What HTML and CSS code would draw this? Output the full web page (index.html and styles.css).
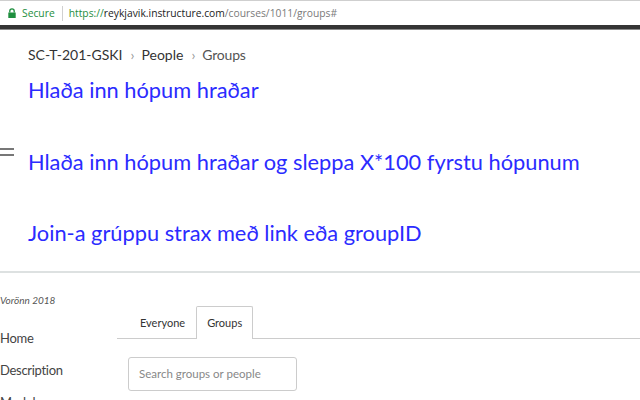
FILE: index.html
```html
<!DOCTYPE html>
<html>
<head>
<meta charset="utf-8">
<link rel="stylesheet" href="styles.css">
</head>
<body>
<div class="addressbar">
  <svg class="lock" width="8" height="10" viewBox="0 0 8 10"><path d="M1.8 4.5V3a2.2 2.2 0 0 1 4.4 0v1.5" fill="none" stroke="#1e8e3e" stroke-width="1.3"/><rect x="0.3" y="4.5" width="7.4" height="5.5" fill="#1e8e3e"/></svg>
  <span class="secure">Secure</span>
  <span class="sep"></span>
  <span class="url"><span class="scheme">https://</span><span class="host">reykjavik.instructure.com</span><span class="path">/courses/1011/groups#</span></span>
</div>
<div class="page">
  <nav class="crumbs"><span>SC-T-201-GSKI</span><span class="chev">›</span><span>People</span><span class="chev">›</span><span class="last">Groups</span></nav>
  <a class="bigl first" href="#">Hlaða inn hópum hraðar</a>
  <div class="row">
    <span class="burger"><i></i><i></i></span>
    <a class="bigl" href="#">Hlaða inn hópum hraðar og sleppa X*100 fyrstu hópunum</a>
  </div>
  <a class="bigl third" href="#">Join-a grúppu strax með link eða groupID</a>
</div>
<div class="course">
  <aside class="side">
    <div class="term">Vorönn 2018</div>
    <div class="nav">Home</div>
    <div class="nav">Description</div>
    <div class="nav">Modules</div>
  </aside>
  <section class="content">
    <div class="tabs">
      <span class="tab">Everyone</span>
      <span class="tab active">Groups</span>
    </div>
    <div class="search">Search groups or people</div>
  </section>
</div>
</body>
</html>
```
FILE: styles.css
```css
html, body { margin: 0; padding: 0; background: #fff; overflow: hidden; }
body { font-family: Lato, "Open Sans", sans-serif; width: 640px; height: 400px; }

.addressbar {
  height: 24px;
  border-top: 1px solid #cfcfcf;
  border-bottom: 4px solid #353535;
  box-shadow: 0 1px 0 #8a8a8a;
  display: flex;
  align-items: center;
  font-family: "Open Sans", "DejaVu Sans", sans-serif;
  font-size: 10.3px;
  padding-left: 8px;
}
.lock { margin-right: 6px; margin-top: -1px; }
.secure { color: #1e8e3e; }
.sep { width: 1px; height: 15px; background: #d0d0d0; margin: 0 6px 0 7px; }
.scheme { color: #1e8e3e; }
.host { color: #222; }
.path { color: #7a7a7a; }

.page { padding: 15px 0 0 0; }
.crumbs { padding-left: 28px; font-size: 14px; color: #333; display: flex; align-items: center; height: 20px; }
.chev { color: #999; margin: 0 7px 0 8px; font-size: 14px; }
.last { color: #555; letter-spacing: -0.2px; }

.bigl { display: block; color: #2b2bff; text-decoration: none; font-size: 21.8px; line-height: 28px; padding-left: 28px; }
.first { margin-top: 12px; }
.row { display: flex; align-items: flex-start; margin-top: 44px; }
.row .bigl { padding-left: 14px; }
.burger { width: 14px; display: flex; flex-direction: column; gap: 4px; padding-top: 0; }
.burger i { display: block; height: 2px; width: 14px; background: #777; }
.third { margin-top: 43px; }

.course { margin-top: 24px; border-top: 2px solid #dde1e1; display: flex; }
.side { width: 117px; padding-top: 21px; }
.term { font-size: 10px; font-style: italic; color: #555; height: 28px; }
.nav { font-size: 13px; letter-spacing: -0.3px; color: #444; height: 32px; line-height: 32px; }
.content { flex: 1; padding-top: 33px; }
.tabs { display: flex; border-bottom: 1px solid #ccc; height: 32px; padding-left: 12px; }
.tab { font-size: 11px; color: #333; padding: 0 10px; line-height: 32px; border: 1px solid transparent; border-bottom: none; }
.tab.active { border-color: #ccc; background: #fff; margin-bottom: -1px; border-radius: 2px 2px 0 0; }
.search { margin: 18px 0 0 11px; width: 157px; height: 32px; border: 1px solid #ccc; border-radius: 3px; font-size: 11.5px; color: #888; line-height: 32px; padding-left: 10px; }
```
